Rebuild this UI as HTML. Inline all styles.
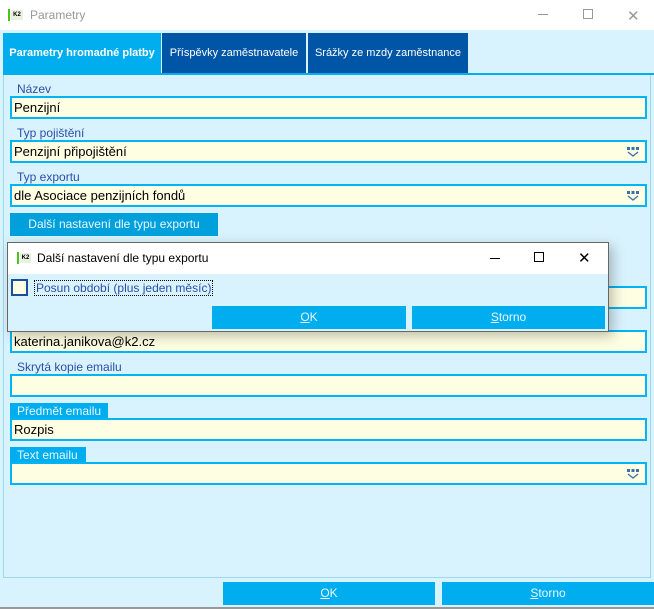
<!DOCTYPE html>
<html><head><meta charset="utf-8"><style>
*{margin:0;padding:0;box-sizing:border-box}
body{width:654px;height:609px;position:relative;background:#d9f3fe;font-family:"Liberation Sans",sans-serif;font-size:12px;overflow:hidden}
.a{position:absolute}
.inp{position:absolute;left:10px;width:637px;height:23px;border:2px solid #00b4f5;background:#fefee2;padding:2px 2px;font-size:13px;color:#000;line-height:16px}
.lbl{position:absolute;left:17px;color:#2a4fa8;font-size:12px}
.blbl{position:absolute;left:10px;background:#00aeef;color:#e8f8ff;font-size:12px;padding:1px 0 0 7px;height:16px;white-space:nowrap;line-height:14px}
.btn{position:absolute;background:#00aeef;color:#eaf8ff;text-align:center;font-size:12px}
.dd{position:absolute;right:6px;top:5px}
.tab{position:absolute;top:33px;height:40px;color:#fff;font-size:11px;line-height:40px;text-align:center;white-space:nowrap}
</style></head><body>
<div class="a" style="left:0;top:0;width:654px;height:30px;background:#fff"></div>
<div class="a" style="left:8px;top:9px;width:2px;height:12px;background:#4cc31c"></div>
<div class="a" style="left:11px;top:10px;width:12px;height:10px;background:#e9f2e0;font-size:6px;font-weight:bold;line-height:10px;text-align:center">K2</div>
<div class="a" style="left:30px;top:8px;color:#999;font-size:12px">Parametry</div>
<div class="a" style="left:538px;top:14px;width:10px;height:1px;background:#999"></div>
<div class="a" style="left:583px;top:9px;width:10px;height:10px;border:1px solid #999"></div>
<div class="a" style="left:627px;top:7px;color:#999;font-size:15px">✕</div>

<div class="tab" style="left:3px;width:158px;background:#00aeef;font-weight:bold">Parametry hromadné platby</div>
<div class="tab" style="left:162px;width:144px;background:#0055a6">Příspěvky zaměstnavatele</div>
<div class="tab" style="left:308px;width:160px;background:#0055a6">Srážky ze mzdy zaměstnance</div>
<div class="a" style="left:3px;top:73px;width:651px;height:2px;background:#00aeef"></div>
<div class="a" style="left:3px;top:75px;width:648px;height:503px;border-left:1px solid #9ed8f0;border-right:1px solid #9ed8f0;border-bottom:1px solid #9ed8f0"></div>

<div class="lbl" style="top:82px">Název</div>
<div class="inp" style="top:96px">Penzijní</div>
<div class="lbl" style="top:126px">Typ pojištění</div>
<div class="inp" style="top:140px">Penzijní připojištění<svg class="dd" width="12" height="10" viewBox="0 0 12 10"><rect x="0" y="0" width="3" height="3" fill="#3a6fb0"/><rect x="4.5" y="0" width="3" height="3" fill="#3a6fb0"/><rect x="9" y="0" width="3" height="3" fill="#3a6fb0"/><path d="M1 5 L6 9 L11 5" stroke="#3a6fb0" fill="none" stroke-width="1.3"/></svg></div>
<div class="lbl" style="top:170px">Typ exportu</div>
<div class="inp" style="top:184px">dle Asociace penzijních fondů<svg class="dd" width="12" height="10" viewBox="0 0 12 10"><rect x="0" y="0" width="3" height="3" fill="#3a6fb0"/><rect x="4.5" y="0" width="3" height="3" fill="#3a6fb0"/><rect x="9" y="0" width="3" height="3" fill="#3a6fb0"/><path d="M1 5 L6 9 L11 5" stroke="#3a6fb0" fill="none" stroke-width="1.3"/></svg></div>
<div class="btn" style="left:10px;top:213px;width:208px;height:23px;line-height:23px;background:#00a0dc">Další nastavení dle typu exportu</div>

<div class="inp" style="top:286px"></div>
<div class="inp" style="top:330px">katerina.janikova@k2.cz</div>
<div class="lbl" style="top:360px">Skrytá kopie emailu</div>
<div class="inp" style="top:374px"></div>
<div class="blbl" style="top:403px;width:98px">Předmět emailu</div>
<div class="inp" style="top:418px">Rozpis</div>
<div class="blbl" style="top:447px;width:76px">Text emailu</div>
<div class="inp" style="top:462px"><svg class="dd" width="12" height="10" viewBox="0 0 12 10"><rect x="0" y="0" width="3" height="3" fill="#3a6fb0"/><rect x="4.5" y="0" width="3" height="3" fill="#3a6fb0"/><rect x="9" y="0" width="3" height="3" fill="#3a6fb0"/><path d="M1 5 L6 9 L11 5" stroke="#3a6fb0" fill="none" stroke-width="1.3"/></svg></div>

<div class="btn" style="left:223px;top:582px;width:212px;height:23px;line-height:23px"><u>O</u>K</div>
<div class="btn" style="left:442px;top:582px;width:212px;height:23px;line-height:23px"><u>S</u>torno</div>
<div class="a" style="left:0;top:607px;width:654px;height:2px;background:#999"></div>

<div class="a" style="left:7px;top:242px;width:602px;height:90px;border:1px solid #666;background:#d9f3fe;box-shadow:4px 4px 12px rgba(0,0,0,0.25)">
<div class="a" style="left:0;top:0;width:600px;height:31px;background:#fff"></div>
<div class="a" style="left:9px;top:9px;width:2px;height:12px;background:#4cc31c"></div>
<div class="a" style="left:12px;top:10px;width:11px;height:10px;background:#e9f2e0;font-size:6px;font-weight:bold;line-height:10px;text-align:center">K2</div>
<div class="a" style="left:29px;top:8px;color:#000;font-size:12px">Další nastavení dle typu exportu</div>
<div class="a" style="left:482px;top:15px;width:10px;height:1px;background:#000"></div>
<div class="a" style="left:526px;top:9px;width:10px;height:10px;border:1px solid #000"></div>
<div class="a" style="left:570px;top:6px;color:#000;font-size:15px">✕</div>
<div class="a" style="left:3px;top:36px;width:17px;height:17px;border:2px solid #1a4f9e;background:#fefee2"></div>
<div class="a" style="left:26px;top:37px;color:#2a4fa8;font-size:12px;border:1px dotted #000;padding:0 1px">Posun období (plus jeden měsíc)</div>
<div class="btn" style="left:204px;top:63px;width:194px;height:23px;line-height:23px"><u>O</u>K</div>
<div class="btn" style="left:404px;top:63px;width:193px;height:23px;line-height:23px"><u>S</u>torno</div>
</div>
</body></html>
